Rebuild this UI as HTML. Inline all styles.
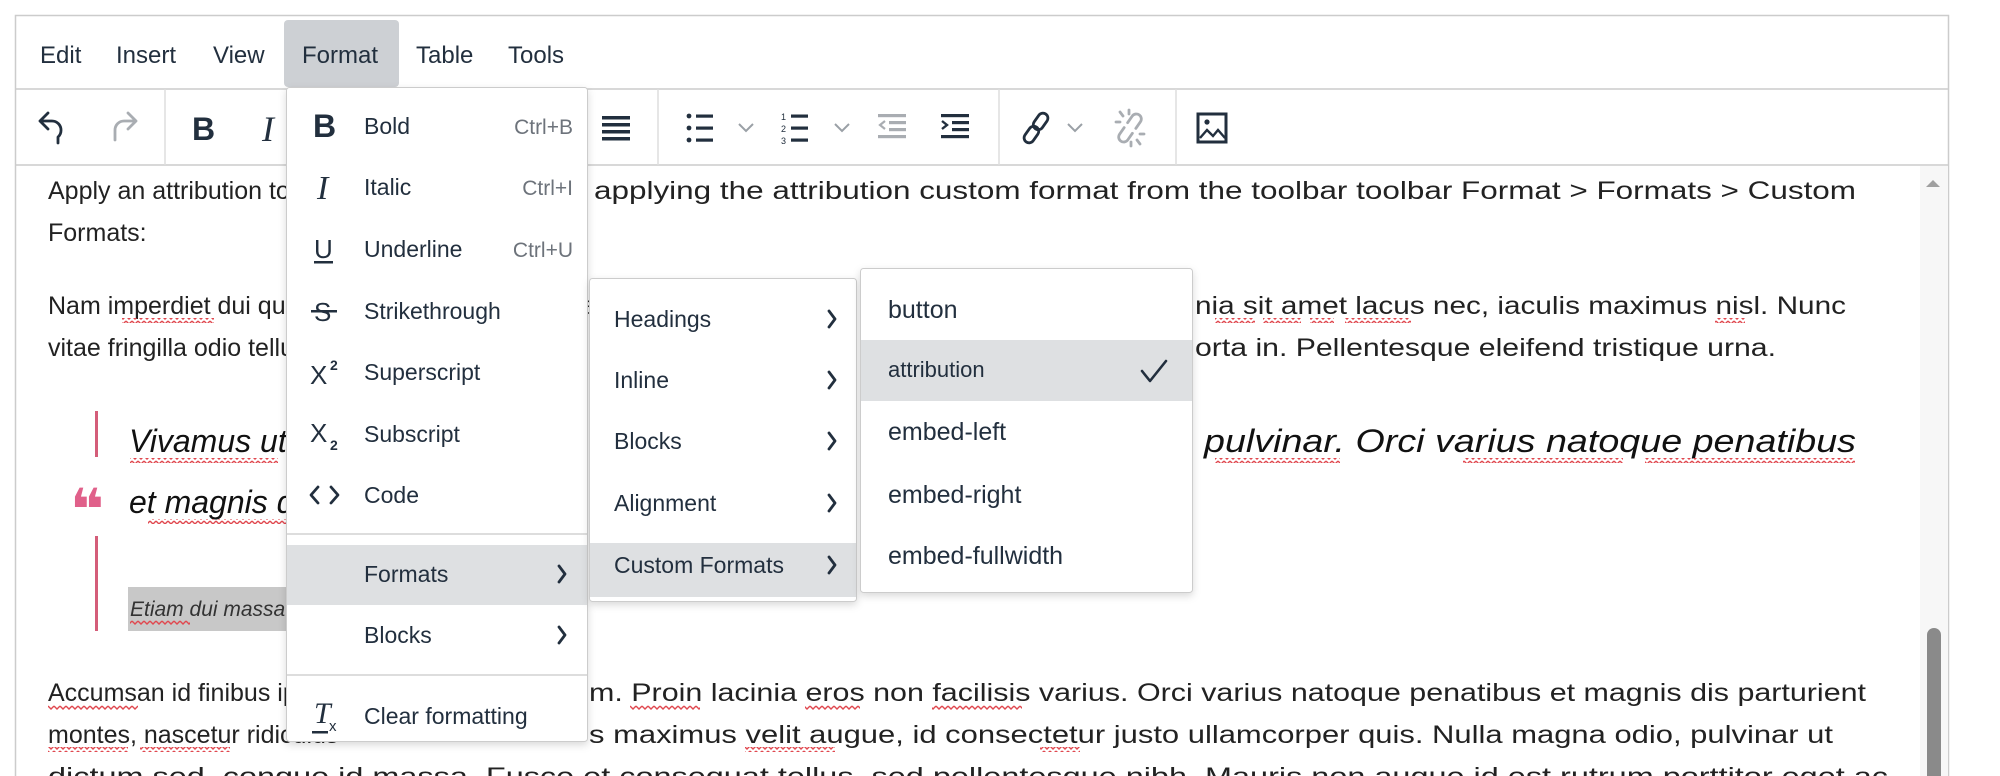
<!DOCTYPE html>
<html><head><meta charset="utf-8"><style>
html,body{margin:0;padding:0;background:#fff;}
svg{display:block;}
text{font-family:"Liberation Sans",sans-serif;}
.m{font-size:24px;fill:#222f3e;}
.c{font-size:25px;fill:#222;}
.mi{font-size:23px;fill:#222f3e;}
.sc{font-size:21px;fill:#6d737b;}
.ic{fill:none;stroke:#222f3e;stroke-width:2.8;stroke-linecap:round;stroke-linejoin:round;}
.gr{stroke:#a9adb2;}
</style></head><body>
<svg width="2000" height="776" viewBox="0 0 2000 776" xmlns="http://www.w3.org/2000/svg">
<defs>
<filter id="sh" x="-10%" y="-10%" width="130%" height="130%"><feDropShadow dx="0" dy="3" stdDeviation="4" flood-color="#000" flood-opacity="0.15"/></filter>
<pattern id="wv" width="6" height="5" patternUnits="userSpaceOnUse"><path d="M0 1 L3 4 L6 1" fill="none" stroke="#e0484f" stroke-width="1.4"/></pattern>
</defs>
<rect x="15.5" y="15.5" width="1933" height="780" fill="#fff" stroke="#ccc" stroke-width="1.5"/>
<line x1="15" y1="89" x2="1949" y2="89" stroke="#ccc" stroke-width="1.5"/>
<line x1="15" y1="165" x2="1949" y2="165" stroke="#ccc" stroke-width="1.5"/>
<rect x="284" y="20" width="115" height="67" rx="4" fill="#cdd0d4"/>
<text class="m" x="40" y="63">Edit</text>
<text class="m" x="116" y="63">Insert</text>
<text class="m" x="213" y="63">View</text>
<text class="m" x="302" y="63">Format</text>
<text class="m" x="416" y="63">Table</text>
<text class="m" x="508" y="63">Tools</text>
<line x1="165" y1="89" x2="165" y2="165" stroke="#ddd" stroke-width="1.5"/>
<line x1="658" y1="89" x2="658" y2="165" stroke="#ddd" stroke-width="1.5"/>
<line x1="999" y1="89" x2="999" y2="165" stroke="#ddd" stroke-width="1.5"/>
<line x1="1176" y1="89" x2="1176" y2="165" stroke="#ddd" stroke-width="1.5"/>
<path class="ic" d="M48 113 l-8 8 8 8 M40 121 h12 a9 9 0 0 1 9 9 a9 9 0 0 1 -3 7 v6"/>
<path class="ic gr" d="M128 113 l8 8 -8 8 M136 121 h-12 a9 9 0 0 0 -9 9 v10"/>
<text x="192" y="140" style="font-size:32px;font-weight:bold;fill:#222f3e">B</text>
<text x="262" y="141" style="font-family:'Liberation Serif',serif;font-size:36px;font-style:italic;fill:#222f3e">I</text>
<g fill="#222f3e"><rect x="602" y="116" width="28" height="3.5"/><rect x="602" y="123" width="28" height="3.5"/><rect x="602" y="130" width="28" height="3.5"/><rect x="602" y="137" width="28" height="3.5"/></g>
<g fill="#222f3e"><circle cx="689" cy="116" r="2.4"/><circle cx="689" cy="128" r="2.4"/><circle cx="689" cy="140" r="2.4"/><rect x="696" y="114.5" width="17" height="3.2"/><rect x="696" y="126.5" width="17" height="3.2"/><rect x="696" y="138.5" width="17" height="3.2"/></g>
<path d="M739 124 l7 7 7 -7" fill="none" stroke="#9aa0a6" stroke-width="2"/>
<g fill="#222f3e"><text x="781" y="120" style="font-size:9px">1</text><text x="781" y="132" style="font-size:9px">2</text><text x="781" y="144" style="font-size:9px">3</text><rect x="791" y="114.5" width="17" height="3.2"/><rect x="791" y="126.5" width="17" height="3.2"/><rect x="791" y="138.5" width="17" height="3.2"/></g>
<path d="M835 124 l7 7 7 -7" fill="none" stroke="#9aa0a6" stroke-width="2"/>
<g fill="#a9adb2"><rect x="878" y="114" width="28" height="3.2"/><rect x="889" y="121" width="17" height="3.2"/><rect x="889" y="128" width="17" height="3.2"/><rect x="878" y="135" width="28" height="3.2"/></g>
<path d="M885 121 l-5 4 5 4" fill="none" stroke="#a9adb2" stroke-width="2.2"/>
<g fill="#222f3e"><rect x="941" y="114" width="28" height="3.2"/><rect x="952" y="121" width="17" height="3.2"/><rect x="952" y="128" width="17" height="3.2"/><rect x="941" y="135" width="28" height="3.2"/></g>
<path d="M942 121 l5 4 -5 4" fill="none" stroke="#222f3e" stroke-width="2.4"/>
<g transform="translate(1036 128) rotate(-55)"><rect x="-17" y="-5" width="18" height="10" rx="5" class="ic" stroke-width="2.6"/><rect x="-1" y="-5" width="18" height="10" rx="5" class="ic" stroke-width="2.6"/></g>
<path d="M1068 124 l7 7 7 -7" fill="none" stroke="#9aa0a6" stroke-width="2"/>
<g transform="translate(1130 128) rotate(-55)"><path class="ic gr" stroke-width="2.4" d="M-3 -5 h-8 a5 5 0 0 0 0 10 h8 M3 -5 h8 a5 5 0 0 1 0 10 h-8"/></g>
<path class="ic gr" stroke-width="2" d="M1120 112 l3 4 M1129 110 v4 M1140 144 l-3 -4 M1131 146 v-4 M1116 122 h4 M1144 134 h-4"/>
<rect x="1198" y="114" width="28" height="28" fill="none" stroke="#222f3e" stroke-width="3"/>
<circle cx="1207" cy="122" r="2.6" fill="#222f3e"/>
<path d="M1200 138 l7 -8 6 6 5 -6 7 8" fill="none" stroke="#222f3e" stroke-width="2.4"/>
<g class="c">
<text x="48" y="199">Apply an attribution to a blockquote by</text>
<text x="594" y="199" textLength="1262" lengthAdjust="spacingAndGlyphs">applying the attribution custom format from the toolbar toolbar Format &gt; Formats &gt; Custom</text>
<text x="48" y="241">Formats:</text>
<text x="48" y="314">Nam imperdiet dui quis nulla faucibus, sed lacinia</text>
<text x="1195" y="314" textLength="651" lengthAdjust="spacingAndGlyphs">nia sit amet lacus nec, iaculis maximus nisl. Nunc</text>
<text x="48" y="356">vitae fringilla odio tellus, a</text>
<text x="1195" y="356" textLength="581" lengthAdjust="spacingAndGlyphs">orta in. Pellentesque eleifend tristique urna.</text>
<text x="48" y="701">Accumsan id finibus ipsum, vitae ornare</text>
<text x="589" y="701" textLength="1277" lengthAdjust="spacingAndGlyphs">m. Proin lacinia eros non facilisis varius. Orci varius natoque penatibus et magnis dis parturient</text>
<text x="48" y="743">montes, nascetur ridiculus</text>
<text x="589" y="743" textLength="1244" lengthAdjust="spacingAndGlyphs">s maximus velit augue, id consectetur justo ullamcorper quis. Nulla magna odio, pulvinar ut</text>
<text x="48" y="785" textLength="1840" lengthAdjust="spacingAndGlyphs">dictum sed, congue id massa. Fusce et consequat tellus, sed pellentesque nibh. Mauris non augue id est rutrum porttitor eget ac</text>
</g>
<rect x="122" y="318" width="92" height="5" fill="url(#wv)"/>
<rect x="1215" y="318" width="40" height="5" fill="url(#wv)"/>
<rect x="1263" y="318" width="38" height="5" fill="url(#wv)"/>
<rect x="1310" y="318" width="24" height="5" fill="url(#wv)"/>
<rect x="1345" y="318" width="66" height="5" fill="url(#wv)"/>
<rect x="1715" y="318" width="30" height="5" fill="url(#wv)"/>
<rect x="48" y="705" width="90" height="5" fill="url(#wv)"/>
<rect x="630" y="705" width="70" height="5" fill="url(#wv)"/>
<rect x="805" y="705" width="55" height="5" fill="url(#wv)"/>
<rect x="932" y="705" width="90" height="5" fill="url(#wv)"/>
<rect x="48" y="747" width="80" height="5" fill="url(#wv)"/>
<rect x="140" y="747" width="90" height="5" fill="url(#wv)"/>
<rect x="745" y="747" width="90" height="5" fill="url(#wv)"/>
<rect x="1040" y="747" width="40" height="5" fill="url(#wv)"/>
<rect x="95" y="411" width="3" height="46" fill="#d45d79"/>
<rect x="95" y="536" width="3" height="95" fill="#d45d79"/>
<text x="70" y="530" style="font-family:'DejaVu Sans',sans-serif;font-size:58px;font-weight:bold;fill:#e0608a">❝</text>
<text x="129" y="452" style="font-size:32px;font-style:italic;fill:#111">Vivamus ut felis ac justo aliquet</text>
<text x="1204" y="452" textLength="652" lengthAdjust="spacingAndGlyphs" style="font-size:32px;font-style:italic;fill:#111">pulvinar. Orci varius natoque penatibus</text>
<text x="129" y="513" style="font-size:32px;font-style:italic;fill:#111">et magnis dis parturient</text>
<rect x="130" y="458" width="148" height="5" fill="url(#wv)"/>
<rect x="1215" y="458" width="125" height="5" fill="url(#wv)"/>
<rect x="1463" y="458" width="160" height="5" fill="url(#wv)"/>
<rect x="1645" y="458" width="210" height="5" fill="url(#wv)"/>
<rect x="148" y="519" width="140" height="5" fill="url(#wv)"/>
<rect x="128" y="587" width="158" height="44" fill="#c8c8c8"/>
<text x="130" y="616" style="font-size:21px;font-style:italic;fill:#333">Etiam dui massa</text>
<rect x="130" y="620" width="60" height="5" fill="url(#wv)"/>
<rect x="1920" y="166" width="28" height="610" fill="#f7f7f7"/>
<path d="M1926 187 l7 -7 7 7 z" fill="#a0a0a0"/>
<rect x="1927" y="628" width="14" height="160" rx="7" fill="#8a8a8a"/>
<g filter="url(#sh)"><rect x="286.5" y="87.5" width="301" height="654" rx="3" fill="#fff" stroke="#ccc"/></g>
<line x1="287" y1="534" x2="587" y2="534" stroke="#ddd" stroke-width="2"/>
<line x1="287" y1="675" x2="587" y2="675" stroke="#ddd" stroke-width="2"/>
<rect x="287" y="545" width="300" height="60" fill="#dee0e2"/>
<text x="313" y="137" style="font-size:32px;font-weight:bold;fill:#222f3e">B</text>
<text x="317" y="199" style="font-family:'Liberation Serif',serif;font-size:34px;font-style:italic;fill:#222f3e">I</text>
<text x="314" y="258" style="font-size:26px;fill:#222f3e">U</text><rect x="314" y="261" width="19" height="2.5" fill="#222f3e"/>
<text x="314" y="321" style="font-size:26px;fill:#222f3e">S</text><rect x="311" y="310" width="26" height="2.5" fill="#222f3e"/>
<text x="310" y="384" style="font-size:26px;fill:#222f3e">X</text><text x="330" y="370" style="font-size:14px;font-weight:bold;fill:#222f3e">2</text>
<text x="310" y="442" style="font-size:26px;fill:#222f3e">X</text><text x="330" y="450" style="font-size:14px;font-weight:bold;fill:#222f3e">2</text>
<path class="ic" stroke-width="2.6" d="M318 487 l-7 8 7 8 M331 487 l7 8 -7 8"/>
<text x="314" y="723" style="font-family:'Liberation Serif',serif;font-size:30px;font-style:italic;fill:#222f3e">T</text><text x="329" y="731" style="font-size:15px;fill:#222f3e">x</text><rect x="312" y="731" width="16" height="2.5" fill="#222f3e"/>
<g class="mi">
<text x="364" y="134">Bold</text>
<text x="364" y="195">Italic</text>
<text x="364" y="257">Underline</text>
<text x="364" y="319">Strikethrough</text>
<text x="364" y="380">Superscript</text>
<text x="364" y="442">Subscript</text>
<text x="364" y="503">Code</text>
<text x="364" y="582">Formats</text>
<text x="364" y="643">Blocks</text>
<text x="364" y="724">Clear formatting</text>
</g>
<g class="sc">
<text x="573" y="134" text-anchor="end">Ctrl+B</text>
<text x="573" y="195" text-anchor="end">Ctrl+I</text>
<text x="573" y="257" text-anchor="end">Ctrl+U</text>
</g>
<path class="ic" stroke-width="2.2" d="M559 566 l6 8 -6 8 M559 627 l6 8 -6 8"/>
<g filter="url(#sh)"><rect x="589.5" y="278.5" width="267" height="323" rx="3" fill="#fff" stroke="#ccc"/></g>
<rect x="590" y="543" width="266" height="54" fill="#dee0e2"/>
<g class="mi">
<text x="614" y="327">Headings</text>
<text x="614" y="388">Inline</text>
<text x="614" y="449">Blocks</text>
<text x="614" y="511">Alignment</text>
<text x="614" y="573">Custom Formats</text>
</g>
<path class="ic" stroke-width="2.2" d="M829 311 l6 8 -6 8 M829 372 l6 8 -6 8 M829 433 l6 8 -6 8 M829 495 l6 8 -6 8 M829 557 l6 8 -6 8"/>
<g filter="url(#sh)"><rect x="860.5" y="268.5" width="332" height="324" rx="3" fill="#fff" stroke="#ccc"/></g>
<rect x="861" y="340" width="331" height="61" fill="#dee0e2"/>
<g class="mi" style="font-size:25px">
<text x="888" y="318">button</text>
<text x="888" y="440">embed-left</text>
<text x="888" y="503">embed-right</text>
<text x="888" y="564">embed-fullwidth</text>
</g>
<text x="888" y="377" style="font-size:22px;fill:#222f3e">attribution</text>
<path d="M1142 371 l8 10 16 -20" fill="none" stroke="#222f3e" stroke-width="2.6" stroke-linecap="round" stroke-linejoin="round"/>
</svg>
</body></html>
